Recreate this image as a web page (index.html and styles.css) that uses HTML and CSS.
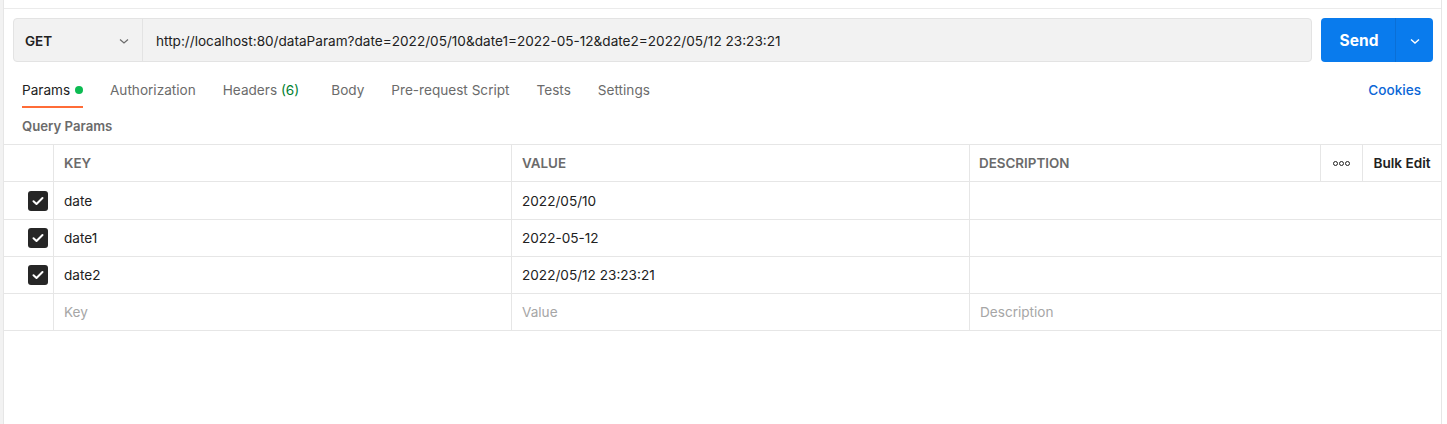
FILE: index.html
```html
<!DOCTYPE html>
<html>
<head>
<meta charset="utf-8">
<link rel="stylesheet" href="styles.css">
</head>
<body>
<div class="app">
  <div class="gutter"></div>
  <div class="pane">
    <div class="topbar"></div>
    <div class="request">
      <div class="urlgroup">
        <div class="method">
          <span class="method-name">GET</span>
          <svg class="chev" width="12" height="12" viewBox="0 0 12 12"><path d="M2 4.5 L6 8 L10 4.5" fill="none" stroke="#6b6b6b" stroke-width="1.2"/></svg>
        </div>
        <div class="url">http://localhost:80/dataParam?date=2022/05/10&amp;date1=2022-05-12&amp;date2=2022/05/12 23:23:21</div>
      </div>
      <div class="send">
        <div class="send-main">Send</div>
        <div class="send-more">
          <svg width="12" height="12" viewBox="0 0 12 12"><path d="M2 4.5 L6 8 L10 4.5" fill="none" stroke="#ffffff" stroke-width="1.4"/></svg>
        </div>
      </div>
    </div>
    <div class="tabs">
      <div class="tab active">Params <span class="dot"></span></div>
      <div class="tab">Authorization</div>
      <div class="tab tab-headers">Headers <span class="count">(6)</span></div>
      <div class="tab">Body</div>
      <div class="tab">Pre-request Script</div>
      <div class="tab">Tests</div>
      <div class="tab">Settings</div>
      <div class="spacer"></div>
      <div class="cookies">Cookies</div>
    </div>
    <div class="section-title">Query Params</div>
    <div class="table">
      <div class="row head">
        <div class="cell c-check"></div>
        <div class="cell c-key">KEY</div>
        <div class="cell c-val">VALUE</div>
        <div class="cell c-desc-h">DESCRIPTION</div>
        <div class="cell c-more"><span class="o"></span><span class="o"></span><span class="o"></span></div>
        <div class="cell c-bulk">Bulk Edit</div>
      </div>
      <div class="row first">
        <div class="cell c-check"><span class="cb"><svg width="12" height="10" viewBox="0 0 12 10"><path d="M1.5 5.2 L4.5 8 L10.5 2" fill="none" stroke="#fff" stroke-width="2" stroke-linecap="round" stroke-linejoin="round"/></svg></span></div>
        <div class="cell c-key">date</div>
        <div class="cell c-val">2022/05/10</div>
        <div class="cell c-desc"></div>
      </div>
      <div class="row">
        <div class="cell c-check"><span class="cb"><svg width="12" height="10" viewBox="0 0 12 10"><path d="M1.5 5.2 L4.5 8 L10.5 2" fill="none" stroke="#fff" stroke-width="2" stroke-linecap="round" stroke-linejoin="round"/></svg></span></div>
        <div class="cell c-key">date1</div>
        <div class="cell c-val">2022-05-12</div>
        <div class="cell c-desc"></div>
      </div>
      <div class="row">
        <div class="cell c-check"><span class="cb"><svg width="12" height="10" viewBox="0 0 12 10"><path d="M1.5 5.2 L4.5 8 L10.5 2" fill="none" stroke="#fff" stroke-width="2" stroke-linecap="round" stroke-linejoin="round"/></svg></span></div>
        <div class="cell c-key">date2</div>
        <div class="cell c-val">2022/05/12 23:23:21</div>
        <div class="cell c-desc"></div>
      </div>
      <div class="row">
        <div class="cell c-check"></div>
        <div class="cell c-key ph">Key</div>
        <div class="cell c-val ph">Value</div>
        <div class="cell c-desc ph">Description</div>
      </div>
    </div>
  </div>
  <div class="rightgap"></div>
</div>
</body>
</html>
```

FILE: styles.css
```css
* { box-sizing: border-box; }
html, body { margin: 0; padding: 0; background: #fff; }
body {
  font-family: Inter, "Noto Sans", sans-serif;
  color: #212121;
  font-size: 13.6px;
}
.app {
  display: flex;
  height: 424px;
  overflow: hidden;
}
.gutter {
  width: 3px;
  background: #f2f2f2;
}
.pane {
  width: 1439px;
  border-left: 1px solid #e6e6e6;
  border-right: 1px solid #e6e6e6;
  display: flex;
  flex-direction: column;
}
.rightgap { flex: 1; }
.topbar {
  height: 9px;
  border-bottom: 1px solid #ebebeb;
}
.request {
  display: flex;
  padding: 9px 8px 0 9px;
  gap: 9px;
}
.urlgroup {
  flex: 1;
  display: flex;
  height: 44px;
  background: #f2f2f2;
  border: 1px solid #e3e3e3;
  border-radius: 4px;
}
.method {
  width: 129px;
  display: flex;
  align-items: center;
  justify-content: space-between;
  padding: 1px 12px 0 11px;
  border-right: 1px solid #e3e3e3;
}
.method-name {
  font-weight: 600;
  font-size: 13.5px;
  color: #212121;
}
.url {
  display: flex;
  align-items: center;
  padding-left: 13px;
  padding-top: 1px;
  font-size: 13.6px;
  color: #212121;
  white-space: nowrap;
}
.send {
  width: 112px;
  height: 44px;
  display: flex;
  background: #097bed;
  border-radius: 4px;
  color: #fff;
}
.send-main {
  width: 75px;
  display: flex;
  align-items: center;
  justify-content: center;
  font-weight: 700;
  font-size: 15.5px;
  border-right: 1px solid #0a6fd6;
  padding-left: 2px;
}
.send-more {
  flex: 1;
  display: flex;
  align-items: center;
  justify-content: center;
  padding-top: 1px;
}
.tabs {
  display: flex;
  align-items: stretch;
  height: 46px;
  padding: 0 0 0 18px;
}
.tab {
  display: flex;
  align-items: center;
  padding: 12px 0 0;
  margin-right: 27px;
  font-size: 13.6px;
  color: #6b6b6b;
  border-bottom: 2px solid transparent;
  white-space: pre;
}
.tab.active {
  color: #212121;
  border-bottom-color: #ff6c37;
}
.tab-headers { margin-right: 32px; }
.dot {
  display: inline-block;
  width: 8px;
  height: 8px;
  border-radius: 50%;
  background: #0cbb52;
  margin-left: 1px;
}
.count { color: #007f31; }
.spacer { flex: 1; }
.cookies {
  display: flex;
  align-items: center;
  padding-top: 12px;
  padding-bottom: 2px;
  margin-right: 20px;
  color: #0b66d6;
  font-size: 13.6px;
  font-weight: 500;
}
.section-title {
  height: 36px;
  display: flex;
  align-items: center;
  padding-left: 18px;
  font-size: 13.2px;
  font-weight: 600;
  color: #6b6b6b;
}
.table {
  border-top: 1px solid #e6e6e6;
}
.row {
  display: flex;
  height: 37px;
  border-bottom: 1px solid #e6e6e6;
}
.row.first { height: 38px; }
.cell {
  display: flex;
  align-items: center;
  font-size: 13.6px;
  color: #212121;
  white-space: nowrap;
}
.c-check {
  width: 50px;
  justify-content: flex-end;
  padding-right: 5px;
  border-right: 1px solid #e6e6e6;
}
.c-key, .c-val {
  width: 458px;
  padding-left: 10px;
  border-right: 1px solid #e6e6e6;
}
.c-desc {
  flex: 1;
  padding-left: 10px;
}
.c-desc-h {
  width: 351px;
  padding-left: 9px;
  border-right: 1px solid #e6e6e6;
}
.c-more {
  width: 42px;
  justify-content: center;
  gap: 1px;
  border-right: 1px solid #e6e6e6;
}
.c-bulk {
  flex: 1;
  justify-content: center;
  font-weight: 600;
  font-size: 13.6px;
  color: #212121;
}
.head .c-key, .head .c-val, .head .c-desc-h {
  font-weight: 600;
  font-size: 13.4px;
  color: #6b6b6b;
}
.o {
  width: 5px;
  height: 5px;
  border: 1.2px solid #212121;
  border-radius: 50%;
}
.ph { color: #a6a6a6; }
.cb {
  width: 20px;
  height: 20px;
  border-radius: 3px;
  background: #262626;
  display: flex;
  align-items: center;
  justify-content: center;
}
```
